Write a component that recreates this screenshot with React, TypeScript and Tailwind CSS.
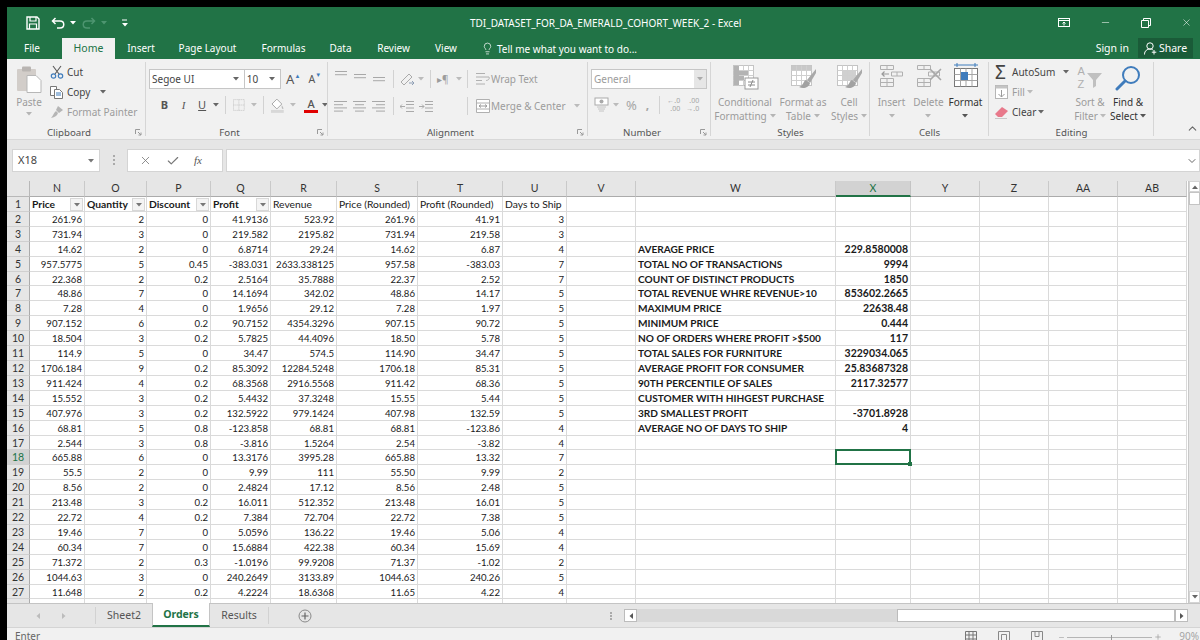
import type { ReactNode } from "react";
import { Lightbulb, Minus, Plus, X, Check, ChevronUp, ChevronDown } from "lucide-react";

const ui = "font-['Noto_Sans',sans-serif]";
const cellFont = "font-['Lato',sans-serif]";

const columns = ["N", "O", "P", "Q", "R", "S", "T", "U", "V", "W", "X", "Y", "Z", "AA", "AB"];

const headers: [string, boolean][] = [
  ["Price", true],
  ["Quantity", true],
  ["Discount", true],
  ["Profit", true],
  ["Revenue", false],
  ["Price (Rounded)", false],
  ["Profit (Rounded)", false],
  ["Days to Ship", false],
];

const orders = [
  "261.96,2,0,41.9136,523.92,261.96,41.91,3",
  "731.94,3,0,219.582,2195.82,731.94,219.58,3",
  "14.62,2,0,6.8714,29.24,14.62,6.87,4",
  "957.5775,5,0.45,-383.031,2633.338125,957.58,-383.03,7",
  "22.368,2,0.2,2.5164,35.7888,22.37,2.52,7",
  "48.86,7,0,14.1694,342.02,48.86,14.17,5",
  "7.28,4,0,1.9656,29.12,7.28,1.97,5",
  "907.152,6,0.2,90.7152,4354.3296,907.15,90.72,5",
  "18.504,3,0.2,5.7825,44.4096,18.50,5.78,5",
  "114.9,5,0,34.47,574.5,114.90,34.47,5",
  "1706.184,9,0.2,85.3092,12284.5248,1706.18,85.31,5",
  "911.424,4,0.2,68.3568,2916.5568,911.42,68.36,5",
  "15.552,3,0.2,5.4432,37.3248,15.55,5.44,5",
  "407.976,3,0.2,132.5922,979.1424,407.98,132.59,5",
  "68.81,5,0.8,-123.858,68.81,68.81,-123.86,4",
  "2.544,3,0.8,-3.816,1.5264,2.54,-3.82,4",
  "665.88,6,0,13.3176,3995.28,665.88,13.32,7",
  "55.5,2,0,9.99,111,55.50,9.99,2",
  "8.56,2,0,2.4824,17.12,8.56,2.48,5",
  "213.48,3,0.2,16.011,512.352,213.48,16.01,5",
  "22.72,4,0.2,7.384,72.704,22.72,7.38,5",
  "19.46,7,0,5.0596,136.22,19.46,5.06,4",
  "60.34,7,0,15.6884,422.38,60.34,15.69,4",
  "71.372,2,0.3,-1.0196,99.9208,71.37,-1.02,2",
  "1044.63,3,0,240.2649,3133.89,1044.63,240.26,5",
  "11.648,2,0.2,4.2224,18.6368,11.65,4.22,4",
].map((row) => row.split(","));

// row number -> label in W, value in X
const results: Record<number, [string, string]> = {
  4: ["AVERAGE PRICE", "229.8580008"],
  5: ["TOTAL NO OF TRANSACTIONS", "9994"],
  6: ["COUNT OF DISTINCT PRODUCTS", "1850"],
  7: ["TOTAL REVENUE WHRE REVENUE>10", "853602.2665"],
  8: ["MAXIMUM PRICE", "22638.48"],
  9: ["MINIMUM PRICE", "0.444"],
  10: ["NO OF ORDERS WHERE PROFIT >$500", "117"],
  11: ["TOTAL SALES FOR FURNITURE", "3229034.065"],
  12: ["AVERAGE PROFIT FOR CONSUMER", "25.83687328"],
  13: ["90TH PERCENTILE OF SALES", "2117.32577"],
  14: ["CUSTOMER WITH HIHGEST PURCHASE", ""],
  15: ["3RD SMALLEST PROFIT", "-3701.8928"],
  16: ["AVERAGE NO OF DAYS TO SHIP", "4"],
};

function Caret({ color = "#8a8a8a", className = "" }: { color?: string; className?: string }) {
  return (
    <svg width="6" height="4" viewBox="0 0 6 4" className={className}>
      <path d="M0 0h6L3 3.5z" fill={color} />
    </svg>
  );
}

function Launcher() {
  return (
    <svg width="7" height="7" viewBox="0 0 7 7" className="absolute right-[4px] bottom-[3px]">
      <path d="M.5 5V.5H5M3 3l3 3M6 3.5V6H3.5" fill="none" stroke="#9a9a9a" strokeWidth="1" />
    </svg>
  );
}

function Group({ width, label, launcher = true, children }: { width: number; label: string; launcher?: boolean; children: ReactNode }) {
  return (
    <div className="relative h-full shrink-0" style={{ width }}>
      <div className="h-[67px] overflow-hidden">{children}</div>
      <div className={`h-[13px] text-center text-[9.7px] leading-[13px] text-[#555] ${launcher ? "pr-[15px]" : ""}`}>{label}</div>
      <div className="absolute right-0 top-[3px] bottom-[3px] w-px bg-[#d6d6d6]" />
      {launcher && <Launcher />}
    </div>
  );
}

function Sep({ h = 18 }: { h?: number }) {
  return <div className="w-px shrink-0 bg-[#d2d2d2]" style={{ height: h }} />;
}

function Lines({ rows }: { rows: [number, number][] }) {
  return (
    <svg width="14" height="12" viewBox="0 0 14 12">
      {rows.map(([x, w], i) => (
        <rect key={i} x={x} y={1 + i * 3.2} width={w} height="1" fill="#a8a8a8" />
      ))}
    </svg>
  );
}

function BigButton({ width, lines, dark, caret = true, icon }: { width: number; lines: string[]; dark?: boolean; caret?: boolean; icon: ReactNode }) {
  return (
    <div className="flex shrink-0 flex-col items-center" style={{ width }}>
      <div className="flex h-[34px] items-start justify-center pt-[5px]">{icon}</div>
      <div className={`mt-[2px] whitespace-nowrap text-center text-[10px] leading-[14px] ${dark ? "text-[#333]" : "text-[#9c9c9c]"}`}>
        {lines.map((line, i) => (
          <div key={line} className="flex h-[14px] items-center justify-center gap-[2px]">
            {line}
            {caret && i === lines.length - 1 && <Caret color={dark ? "#555" : "#b5b5b5"} className="ml-[1px]" />}
          </div>
        ))}
        {lines.length === 1 && (
          <div className="flex h-[14px] items-center justify-center">
            <Caret color={dark ? "#555" : "#b5b5b5"} />
          </div>
        )}
      </div>
    </div>
  );
}

function TableIcon({ kind }: { kind: "cond" | "table" | "cell" }) {
  return (
    <svg width="27" height="27" viewBox="0 0 27 27">
      <rect x="1.5" y="1.5" width="20" height="20" fill="#fff" stroke="#c4c4c4" />
      {kind === "table" && <rect x="1.5" y="1.5" width="20" height="5" fill="#c8c8c8" />}
      {kind === "cell" && <rect x="6" y="6" width="14" height="11" fill="#d0d0d0" />}
      {[6.5, 11.5, 16.5].map((v) => (
        <path key={v} d={`M${v} 1.5v20M1.5 ${v}h20`} stroke="#cfcfcf" strokeWidth="1" />
      ))}
      {kind === "cond" ? (
        <>
          <path d="M2 2h5v19H2z" fill="#b3b3b3" />
          <path d="M7 7h9v4H7zM7 12h5v4H7z" fill="#b3b3b3" />
          <rect x="13" y="14" width="13" height="11" fill="#fff" stroke="#9a9a9a" />
          <path d="M16 18h7M16 21h7M21 16l-3 7" stroke="#8a8a8a" strokeWidth="1" fill="none" />
        </>
      ) : (
        <>
          <path d="M26 5L17 16l3 3L26 9z" fill="#a9a9a9" />
          <path d="M16 16c-3 1-2 5-7 7 4 2 10 1 11-4z" fill="#a2a2a2" />
        </>
      )}
    </svg>
  );
}

function CellsIcon({ kind }: { kind: "insert" | "delete" | "format" }) {
  if (kind === "format") {
    return (
      <svg width="26" height="27" viewBox="0 0 26 27" className="-mt-[2px]">
        <path d="M1 3h24M4 1v4M22 1v4" stroke="#3f7cbc" strokeWidth="1" fill="none" />
        <rect x="1.5" y="6.5" width="23" height="18" fill="#fff" stroke="#777" />
        <path d="M7.5 6.5v18M13 6.5v18M19 6.5v18M1.5 12.5h23M1.5 18.5h23" stroke="#a5a5a5" strokeWidth="1" />
        <rect x="8" y="10" width="7" height="8" fill="#3f7cbc" />
      </svg>
    );
  }
  return (
    <svg width="26" height="24" viewBox="0 0 26 24">
      <path d="M1.5 1.5h13v4h-13zM8 1.5v4M1.5 14.5h13v8h-13zM1.5 18.5h13M8 14.5v8" fill="none" stroke="#b0b0b0" strokeWidth="1" />
      <path d="M12.5 8h11v4h-11zM18 8v4" fill="none" stroke="#b0b0b0" strokeWidth="1" />
      {kind === "insert" ? (
        <path d="M10 10H3M5.5 7.5L3 10l2.5 2.5" fill="none" stroke="#9a9a9a" strokeWidth="1.2" />
      ) : (
        <path d="M14 5l11 11M25 5L14 16" fill="none" stroke="#a8a8a8" strokeWidth="1.6" />
      )}
    </svg>
  );
}

function Ribbon() {
  return (
    <div className={`flex h-[80px] shrink-0 bg-[#f1f1f1] ${ui}`}>
      <Group width={139} label="Clipboard">
        <div className="flex h-full">
          <div className="flex w-[43px] flex-col items-center pl-[1px]">
            <svg width="26" height="27" viewBox="0 0 26 27" className="mt-[7px]">
              <rect x="1" y="3" width="19" height="22" rx="1" fill="#d2cdc9" />
              <rect x="6" y="0.5" width="9" height="5" rx="1" fill="#b9b5b2" />
              <path d="M11 9.5h9l5 5v12H11z" fill="#fff" stroke="#b7b7b7" />
            </svg>
            <div className="mt-[2px] text-[10px] leading-[14px] text-[#9c9c9c]">Paste</div>
            <Caret color="#b5b5b5" className="mt-[3px]" />
          </div>
          <div className="flex flex-col gap-[6px] pt-[6px] text-[10px] leading-[14px]">
            <div className="flex h-[14px] items-center gap-[3px] text-[#444]">
              <svg width="14" height="14" viewBox="0 0 14 14">
                <path d="M3 1l6 8M11 1L5 9" stroke="#5a5a5a" strokeWidth="1.1" fill="none" />
                <circle cx="3.5" cy="11" r="2.2" fill="none" stroke="#3f7cbc" strokeWidth="1.2" />
                <circle cx="10.5" cy="11" r="2.2" fill="none" stroke="#3f7cbc" strokeWidth="1.2" />
              </svg>
              Cut
            </div>
            <div className="flex h-[14px] items-center gap-[3px] text-[#444]">
              <svg width="14" height="14" viewBox="0 0 14 14">
                <path d="M.5 1.5h6v9h-6z" fill="#fff" stroke="#777" />
                <path d="M4.5 4.5h5l3 3v6h-8z" fill="#fff" stroke="#777" />
                <path d="M6 8h5M6 10h5" stroke="#3f7cbc" strokeWidth="1" />
              </svg>
              Copy
              <Caret color="#666" className="ml-[7px]" />
            </div>
            <div className="flex h-[14px] items-center gap-[3px] text-[#9c9c9c]">
              <svg width="14" height="14" viewBox="0 0 14 14">
                <path d="M8 1l5 4-4 3-3-3zM6 6l2 2c-1 3-3 4-7 5 2-2 2-4 5-7z" fill="#b5b5b5" />
              </svg>
              Format Painter
            </div>
          </div>
        </div>
      </Group>

      <Group width={182} label="Font">
        <div className="flex flex-col gap-[7px] pl-[3px] pt-[10px]">
          <div className="flex h-[20px] items-center">
            <div className="flex h-[20px] w-[98px] items-center justify-between border border-[#c6c6c6] bg-white pl-[2px] pr-[5px] text-[10px] text-[#444]">
              Segoe UI
              <Caret color="#666" />
            </div>
            <div className="-ml-px flex h-[20px] w-[38px] items-center justify-between border border-[#c6c6c6] bg-white pl-[2px] pr-[5px] text-[10px] text-[#444]">
              10
              <Caret color="#666" />
            </div>
            <div className="ml-[5px] flex w-[24px] items-start text-[13px] leading-[14px] text-[#555]">
              A<span className="mt-[1px] text-[6px] leading-[6px] text-[#3f7cbc]">▲</span>
            </div>
            <div className="ml-[-1px] flex w-[20px] items-start text-[10.5px] leading-[14px] text-[#555]">
              A<span className="text-[6px] leading-[6px] text-[#3f7cbc]">▼</span>
            </div>
          </div>
          <div className="flex h-[18px] items-center pl-[6px] text-[11px] text-[#555]">
            <span className="w-[19px] text-center font-bold">B</span>
            <span className="w-[20px] text-center font-['Liberation_Serif',serif] italic">I</span>
            <span className="w-[18px] text-center underline">U</span>
            <Caret color="#666" className="ml-[2px]" />
            <div className="mx-[6px]"><Sep /></div>
            <svg width="14" height="14" viewBox="0 0 14 14">
              <path d="M1.5 1.5h11v11h-11zM7 1.5v11M1.5 7h11" fill="none" stroke="#c4c4c4" strokeDasharray="1 1" />
            </svg>
            <Caret color="#bbb" className="ml-[5px]" />
            <div className="mx-[6px]"><Sep /></div>
            <svg width="16" height="16" viewBox="0 0 16 16">
              <path d="M2 7l5-5 5 5-5 5z" fill="#fff" stroke="#a8a8a8" />
              <path d="M12 8c1 2 2 3 1.5 4-1 .5-2-1-1.5-4z" fill="#bbb" />
              <rect x="1" y="13" width="13" height="3" fill="#d8d8d8" />
            </svg>
            <Caret color="#bbb" className="ml-[5px]" />
            <div className="ml-[8px] flex w-[14px] flex-col items-center text-[11px] font-medium leading-[13px] text-[#555]">
              A
              <div className="h-[3px] w-[14px] bg-[#e00000]" />
            </div>
            <Caret color="#666" className="ml-[4px]" />
          </div>
        </div>
      </Group>

      <Group width={260} label="Alignment">
        <div className="flex flex-col gap-[9px] pl-[6px] pt-[11px]">
          <div className="flex h-[18px] items-center text-[10px] text-[#9c9c9c]">
            <div className="flex w-[59px] gap-[5px]">
              <Lines rows={[[1, 12], [1, 12], [1, 0]]} />
              <div className="mt-[3px]"><Lines rows={[[1, 12], [1, 12], [1, 0]]} /></div>
              <div className="mt-[6px]"><Lines rows={[[1, 12], [1, 12], [1, 0]]} /></div>
            </div>
            <Sep />
            <svg width="15" height="14" viewBox="0 0 15 14" className="ml-[6px]">
              <path d="M1 10l8-8 3 3-8 8z" fill="none" stroke="#aaa" />
              <path d="M9 11h5M12 9l2 2-2 2" stroke="#8f9fb5" fill="none" />
            </svg>
            <Caret color="#bbb" className="ml-[3px]" />
            <div className="mx-[6px]"><Sep /></div>
            <span className="w-[14px] text-[10px]">▸¶</span>
            <Caret color="#bbb" className="ml-[5px]" />
            <div className="ml-[5px] mr-[7px]"><Sep /></div>
            <svg width="16" height="14" viewBox="0 0 16 14">
              <path d="M1 1.5h9M1 5h13c1 2-1 3.500-3 3.500M1 8.500h6M1 12h9" fill="none" stroke="#b0b0b0" />
            </svg>
            <span>Wrap Text</span>
          </div>
          <div className="flex h-[18px] items-center text-[10px] text-[#9c9c9c]">
            <div className="flex w-[59px] gap-[5px]">
              <Lines rows={[[0, 13], [0, 9], [0, 13], [0, 9]]} />
              <Lines rows={[[0, 13], [2, 9], [0, 13], [2, 9]]} />
              <Lines rows={[[0, 13], [4, 9], [0, 13], [4, 9]]} />
            </div>
            <Sep />
            <svg width="34" height="13" viewBox="0 0 34 13" className="ml-[6px]">
              <path d="M5 6.500H0M2 4.500L0 6.500l2 2M6 1.500h8M6 4.500h8M6 8h8M6 11.500h8" stroke="#aaa" fill="none" />
              <path d="M19 6.500h5M22 4.500l2 2-2 2M25 1.500h8M25 4.500h8M25 8h8M25 11.500h8" stroke="#aaa" fill="none" />
            </svg>
            <div className="ml-[33px] mr-[7px]"><Sep /></div>
            <svg width="16" height="14" viewBox="0 0 16 14">
              <path d="M1.500 .5h13v13h-13zM1.500 4h13M1.500 10h13" fill="#fff" stroke="#b0b0b0" />
              <path d="M4 7h8M4 7l2-1.500M4 7l2 1.500M12 7l-2-1.500M12 7l-2 1.500" stroke="#9a9a9a" fill="none" />
            </svg>
            <span>Merge &amp; Center</span>
            <Caret color="#bbb" className="ml-[8px]" />
          </div>
        </div>
      </Group>

      <Group width={123} label="Number">
        <div className="pl-[3px] pt-[10px]">
          <div className="flex h-[20px] w-[116px] items-center justify-between border border-[#c6c6c6] bg-white pl-[2px] text-[10px] text-[#9c9c9c]">
            General
            <div className="flex h-full w-[12px] items-center justify-center bg-[#e6e6e6]">
              <Caret color="#aaa" />
            </div>
          </div>
          <div className="mt-[7px] flex h-[18px] items-center pl-[3px] text-[#a5a5a5]">
            <svg width="15" height="16" viewBox="0 0 15 16">
              <rect x="1" y="1" width="13" height="7" fill="#fff" stroke="#aaa" />
              <circle cx="7.500" cy="4.500" r="2" fill="#aaa" />
              <path d="M3 10h9M4 12h7M5 14h5" stroke="#c4c4c4" />
            </svg>
            <Caret color="#bbb" className="ml-[4px]" />
            <span className="ml-[7px] text-[13px] leading-none">%</span>
            <span className="ml-[9px] text-[12px] font-bold leading-none">,</span>
            <div className="ml-[10px] mr-[6px]"><Sep /></div>
            <div className="flex gap-[5px] text-[7px] leading-[8px]">
              <div className="w-[14px] text-right">←.0<br />.00</div>
              <div className="w-[14px] text-right">.00<br />→.0</div>
            </div>
          </div>
        </div>
      </Group>

      <Group width={159} label="Styles" launcher={false}>
        <div className="flex pl-[2px]">
          <BigButton width={64} lines={["Conditional", "Formatting"]} icon={<TableIcon kind="cond" />} />
          <BigButton width={52} lines={["Format as", "Table"]} icon={<TableIcon kind="table" />} />
          <BigButton width={40} lines={["Cell", "Styles"]} icon={<TableIcon kind="cell" />} />
        </div>
      </Group>

      <Group width={119} label="Cells" launcher={false}>
        <div className="flex pl-[3px]">
          <BigButton width={37} lines={["Insert"]} caret={false} icon={<CellsIcon kind="insert" />} />
          <BigButton width={37} lines={["Delete"]} caret={false} icon={<CellsIcon kind="delete" />} />
          <BigButton width={37} lines={["Format"]} caret={false} dark icon={<CellsIcon kind="format" />} />
        </div>
      </Group>

      <Group width={165} label="Editing" launcher={false}>
        <div className="flex">
          <div className="flex w-[84px] flex-col gap-[6px] pl-[6px] pt-[6px] text-[10px] leading-[14px]">
            <div className="flex h-[14px] items-center text-[#444]">
              <span className="w-[17px] text-[19px] leading-[14px] text-[#444]">Σ</span>
              AutoSum
              <Caret color="#666" className="ml-[8px]" />
            </div>
            <div className="flex h-[14px] items-center text-[#9c9c9c]">
              <svg width="13" height="14" viewBox="0 0 13 14" className="mr-[4px]">
                <rect x=".5" y=".5" width="12" height="13" fill="#fff" stroke="#b5b5b5" />
                <rect x=".5" y=".5" width="12" height="3" fill="#c4c4c4" />
                <path d="M6.500 5v7M3.500 9l3 3 3-3" stroke="#9a9a9a" fill="none" />
              </svg>
              Fill
              <Caret color="#bbb" className="ml-[2px]" />
            </div>
            <div className="flex h-[14px] items-center text-[#444]">
              <svg width="13" height="13" viewBox="0 0 13 13" className="mr-[4px]">
                <path d="M0 8l7-7 6 4-6 6H3z" fill="#e8798b" />
                <path d="M0 12.500h12" stroke="#c8c8c8" />
              </svg>
              Clear
              <Caret color="#666" className="ml-[2px]" />
            </div>
          </div>
          <div className="-ml-[2px] flex w-[38px] flex-col items-center">
            <div className="flex h-[34px] items-start pt-[6px]">
              <div className="flex w-[9px] flex-col font-['Liberation_Sans',sans-serif] text-[11px] leading-[13px] text-[#b0b0b0]">
                <span className="h-[13px]">A</span>
                <span className="h-[13px]">Z</span>
              </div>
              <svg width="16" height="16" viewBox="0 0 16 16" className="mt-[7px]">
                <path d="M0 1h15L9 8v6l-3 2V8z" fill="#c0c0c0" />
              </svg>
            </div>
            <div className="mt-[2px] whitespace-nowrap text-[10px] leading-[14px] text-[#9c9c9c]">Sort &amp;</div>
            <div className="flex items-center gap-[2px] whitespace-nowrap text-[10px] leading-[14px] text-[#9c9c9c]">
              Filter <Caret color="#bbb" />
            </div>
          </div>
          <div className="flex w-[38px] flex-col items-center">
            <div className="flex h-[34px] items-start pt-[6px]">
              <svg width="26" height="26" viewBox="0 0 26 26">
                <circle cx="16" cy="10" r="8" fill="none" stroke="#3f7cbc" strokeWidth="2" />
                <path d="M10 16l-8 8" stroke="#3f7cbc" strokeWidth="3" strokeLinecap="round" />
              </svg>
            </div>
            <div className="mt-[2px] whitespace-nowrap text-[10px] leading-[14px] text-[#333]">Find &amp;</div>
            <div className="flex items-center gap-[2px] whitespace-nowrap text-[10px] leading-[14px] text-[#333]">
              Select <Caret color="#555" />
            </div>
          </div>
        </div>
      </Group>

      <div className="flex flex-1 items-end justify-end pb-[4px] pr-[1px]">
        <ChevronUp size={13} color="#666" />
      </div>
    </div>
  );
}

function TitleBar() {
  return (
    <div className={`flex h-[31px] shrink-0 items-center bg-[#217346] text-white ${ui}`}>
      <div className="flex w-[463px] items-center pl-[19px]">
        <svg width="14" height="14" viewBox="0 0 14 14">
          <path d="M1 1h10l2 2v10H1z" fill="none" stroke="#fff" strokeWidth="1.4" />
          <path d="M4 1v4h6V1M3.500 13V8h7v5" fill="none" stroke="#fff" strokeWidth="1.2" />
        </svg>
        <svg width="14" height="12" viewBox="0 0 14 12" className="ml-[11px]">
          <path d="M4.500 1L1.500 4l3 3M2 4h7c5 0 5 7 0 7H6" fill="none" stroke="#fff" strokeWidth="1.5" />
        </svg>
        <Caret color="#fff" className="ml-[5px]" />
        <svg width="14" height="12" viewBox="0 0 14 12" className="ml-[6px]">
          <path d="M9.500 1l3 3-3 3M12 4H5c-5 0-5 7 0 7h3" fill="none" stroke="#4d9570" strokeWidth="1.5" />
        </svg>
        <Caret color="#4d9570" className="ml-[5px]" />
        <svg width="6" height="8" viewBox="0 0 6 8" className="ml-[15px]">
          <path d="M0 1h5" stroke="#fff" />
          <path d="M0 4h6L3 7.500z" fill="#fff" />
        </svg>
      </div>
      <div className="whitespace-nowrap text-[10px] leading-none">TDI_DATASET_FOR_DA_EMERALD_COHORT_WEEK_2 - Excel</div>
      <div className="ml-auto flex items-center gap-[29px] pr-[8px]">
        <svg width="12" height="9" viewBox="0 0 12 9">
          <rect x=".5" y=".5" width="11" height="8" fill="none" stroke="#fff" />
          <path d="M.5 2.500h11" stroke="#fff" />
          <path d="M6 7.500v-3M4.500 5.500L6 4l1.500 1.500" stroke="#fff" fill="none" />
        </svg>
        <Minus size={11} strokeWidth={1.2} className="ml-[1px]" />
        <svg width="10" height="10" viewBox="0 0 10 10" className="ml-[1px]">
          <path d="M.5 2.500h7v7h-7zM2.500 2.500v-2h7v7h-2" fill="none" stroke="#fff" />
        </svg>
        <X size={11} strokeWidth={1.2} className="ml-[1px]" />
      </div>
    </div>
  );
}

function TabRow() {
  const tabs: [string, string][] = [
    ["Insert", "w-[52px]"],
    ["Page Layout", "w-[81px]"],
    ["Formulas", "w-[71px]"],
    ["Data", "w-[43px]"],
    ["Review", "w-[63px]"],
    ["View", "w-[42px]"],
  ];
  return (
    <div className={`flex h-[21px] shrink-0 items-stretch bg-[#217346] text-[10px] leading-[20px] text-white ${ui}`}>
      <div className="w-[50px] text-center">File</div>
      <div className="ml-[5px] w-[53px] bg-[#f1f1f1] text-center text-[10.5px] text-[#217346]">Home</div>
      {tabs.map(([name, width]) => (
        <div key={name} className={`${width} text-center`}>{name}</div>
      ))}
      <div className="ml-[14px] flex items-center gap-[3px]">
        <Lightbulb size={13} strokeWidth={1.3} />
        Tell me what you want to do...
      </div>
      <div className="ml-auto flex text-[10.5px]">
        <span className="mr-[9px]">Sign in</span>
        <div className="mb-[1px] mr-[7px] flex w-[55px] items-center justify-center gap-[2px] bg-[#1a5b38]">
          <svg width="13" height="13" viewBox="0 0 13 13">
            <circle cx="6" cy="4" r="3.200" fill="none" stroke="#fff" />
            <path d="M.5 12.500c0-4 3-5.500 5.500-5.500 1 0 2 .3 2.800.8M10 8v4.500M7.800 10.200h4.500" fill="none" stroke="#fff" />
          </svg>
          Share
        </div>
      </div>
    </div>
  );
}

function FormulaBar() {
  return (
    <div className={`flex h-[36px] shrink-0 items-start border-t border-[#d8d8d8] bg-[#e6e6e6] pt-[9px] pl-[5px] ${ui}`}>
      <div className="flex h-[23px] w-[88px] items-center justify-between border border-[#d4d4d4] bg-white pl-[5px] pr-[5px] text-[11px] text-[#444]">
        X18
        <Caret color="#777" />
      </div>
      <div className="flex w-[27px] flex-col items-center gap-[2px] pt-[6px]">
        <span className="h-[2px] w-[2px] bg-[#aaa]" />
        <span className="h-[2px] w-[2px] bg-[#aaa]" />
        <span className="h-[2px] w-[2px] bg-[#aaa]" />
      </div>
      <div className="flex h-[23px] w-[96px] items-center border border-[#d4d4d4] bg-white pl-[11px] text-[#777]">
        <X size={13} strokeWidth={1.5} />
        <Check size={14} strokeWidth={2} className="ml-[14px]" />
        <span className="ml-[14px] font-['Liberation_Serif',serif] text-[11px] italic text-[#555]">fx</span>
      </div>
      <div className="ml-[3px] flex h-[23px] flex-1 items-center justify-end border border-[#d4d4d4] bg-white pr-[1px]">
        <ChevronDown size={12} color="#666" />
      </div>
    </div>
  );
}

function Cell({ row, col }: { row: number; col: number }) {
  const base = "min-w-0 overflow-visible whitespace-nowrap border-b border-r border-[#dadada] bg-white px-[2px] text-[#1a1a1a]";
  if (row === 1 && col < headers.length) {
    const [label, filter] = headers[col];
    return (
      <div className={`${base} relative text-[10.3px] ${filter ? "font-bold" : ""}`}>
        {label}
        {filter && (
          <div className="absolute right-[1px] top-[1px] flex h-[13px] w-[13px] items-center justify-center border border-[#d8d8d8] bg-[#f4f4f4]">
            <Caret color="#777" />
          </div>
        )}
      </div>
    );
  }
  if (row > 1 && row <= 27 && col < 8) {
    return <div className={`${base} text-right`}>{orders[row - 2][col]}</div>;
  }
  if (col === 9 && results[row]) {
    return <div className={`${base} text-[10.1px] font-bold`}>{results[row][0]}</div>;
  }
  if (col === 10 && results[row]) {
    return <div className={`${base} text-right text-[10.5px] font-bold`}>{results[row][1]}</div>;
  }
  if (col === 10 && row === 18) {
    return (
      <div className={`${base} relative`}>
        <div className="absolute -left-[1px] -top-[1px] bottom-[-1px] right-[-1px] border-2 border-[#217346]" />
        <div className="absolute bottom-[-2px] right-[-2px] h-[4px] w-[4px] bg-[#217346]" />
      </div>
    );
  }
  return <div className={base} />;
}

function Sheet() {
  const rows = Array.from({ length: 28 }, (_, i) => i + 1);
  return (
    <div className={`mt-[6px] flex h-[422px] shrink-0 overflow-hidden bg-white ${cellFont}`}>
      <div className="min-w-0 flex-1 overflow-hidden">
        <div className="grid grid-cols-[23px_55px_62px_64px_60px_66px_81px_85px_64px_69px_200px_75px_69px_69px_69px_69px] grid-rows-[16px] auto-rows-[14.92px] text-[9.6px] leading-[15px]">
          <div className="border-b border-r border-[#b8b8b8] bg-[#e6e6e6]" />
          {columns.map((c) => (
            <div
              key={c}
              className={`border-r text-center text-[10.5px] leading-[15px] ${
                c === "X"
                  ? "border-b-2 border-r-[#c4c4c4] border-b-[#217346] bg-[#d2d2d2] text-[#217346]"
                  : "border-b border-r-[#c9c9c9] border-b-[#ababab] bg-[#e6e6e6] text-[#333]"
              }`}
            >
              {c}
            </div>
          ))}
          {rows.map((row) => [
            <div
              key={`h${row}`}
              className={`border-b border-r border-b-[#d0d0d0] border-r-[#ababab] text-center text-[10.5px] ${
                row === 18 ? "bg-[#d2d2d2] text-[#217346]" : "bg-[#e6e6e6] text-[#333]"
              }`}
            >
              {row < 28 ? row : ""}
            </div>,
            ...columns.map((c, col) => <Cell key={`${c}${row}`} row={row} col={col} />),
          ])}
        </div>
      </div>
      <div className="flex w-[12px] shrink-0 flex-col border-l border-[#c8c8c8] bg-[#e6e6e6]">
        <div className="flex h-[11px] items-center justify-center border border-[#d4d4d4] bg-white">
          <Caret color="#666" className="rotate-180" />
        </div>
        <div className="h-[13px] border border-[#c4c4c4] bg-white" />
        <div className="flex-1" />
        <div className="flex h-[12px] items-center justify-center border border-[#d4d4d4] bg-white">
          <Caret color="#666" />
        </div>
      </div>
    </div>
  );
}

function SheetTabs() {
  return (
    <div className={`flex h-[24px] shrink-0 items-center border-t border-[#c4c4c4] bg-[#e6e6e6] text-[10.5px] ${ui}`}>
      <div className="flex w-[88px] shrink-0 items-center justify-center gap-[20px]">
        <Caret color="#bcbcbc" className="rotate-90" />
        <Caret color="#bcbcbc" className="-rotate-90" />
      </div>
      <Sep h={17} />
      <div className="w-[56px] text-center text-[#555]">Sheet2</div>
      <div className="-mt-px flex h-[24px] w-[58px] items-center justify-center border-x border-b-2 border-x-[#c4c4c4] border-b-[#217346] bg-white pt-[2px] font-bold text-[#217346]">
        Orders
      </div>
      <div className="w-[58px] text-center text-[#555]">Results</div>
      <Sep h={17} />
      <svg width="14" height="14" viewBox="0 0 14 14" className="ml-[29px]">
        <circle cx="7" cy="7" r="6" fill="none" stroke="#8a8a8a" />
        <path d="M7 3.500v7M3.500 7h7" stroke="#666" strokeWidth="1.2" />
      </svg>
      <div className="ml-[296px] flex w-[5px] flex-col items-center gap-[1px]">
        <span className="h-[2px] w-[2px] bg-[#aaa]" />
        <span className="h-[2px] w-[2px] bg-[#aaa]" />
        <span className="h-[2px] w-[2px] bg-[#aaa]" />
      </div>
      <div className="ml-[11px] flex h-[13px] w-[13px] items-center justify-center border border-[#bcbcbc] bg-white">
        <Caret color="#555" className="rotate-90" />
      </div>
      <div className="h-[13px] w-[260px] bg-[#d9d9d9]" />
      <div className="h-[13px] w-[278px] border border-[#bcbcbc] bg-white" />
      <div className="flex h-[13px] w-[13px] items-center justify-center border border-[#bcbcbc] bg-white">
        <Caret color="#555" className="-rotate-90" />
      </div>
    </div>
  );
}

function StatusBar() {
  return (
    <div className={`flex h-[13px] shrink-0 items-start overflow-hidden border-t border-[#d4d4d4] bg-[#f1f1f1] pl-[8px] pt-[1px] text-[10px] leading-[14px] text-[#666] ${ui}`}>
      Enter
      <div className="ml-auto flex items-start pr-[1px] pt-[2px]">
        <svg width="12" height="11" viewBox="0 0 12 11">
          <path d="M.5.500h11v10h-11zM4 .5v10M8 .5v10M.5 4h11M.5 8h11" fill="none" stroke="#777" />
        </svg>
        <svg width="12" height="11" viewBox="0 0 12 11" className="ml-[21px]">
          <path d="M.5.500h11v10h-11zM3.500 3.500h5v7h-5z" fill="none" stroke="#888" />
        </svg>
        <svg width="12" height="11" viewBox="0 0 12 11" className="ml-[21px]">
          <path d="M.5.500h11v10h-11zM4 .5v5h4v-5" fill="none" stroke="#888" />
        </svg>
        <div className="ml-[15px] mt-[2px] flex w-[104px] items-center text-[#999]">
          <Minus size={7} />
          <div className="relative mx-[2px] h-px flex-1 bg-[#b5b5b5]">
            <div className="absolute left-[44px] top-[-2px] h-[5px] w-px bg-[#999]" />
          </div>
          <Plus size={8} />
        </div>
        <span className="-mt-[2px] ml-[17px] text-[#a5a5a5]">90%</span>
      </div>
    </div>
  );
}

export default function App() {
  return (
    <div className="h-[640px] w-[1200px] overflow-hidden bg-black pl-[7px] pt-[7px]">
      <div className="flex h-[633px] w-[1193px] flex-col overflow-hidden bg-[#e6e6e6]">
        <TitleBar />
        <TabRow />
        <Ribbon />
        <FormulaBar />
        <Sheet />
        <SheetTabs />
        <StatusBar />
      </div>
    </div>
  );
}
